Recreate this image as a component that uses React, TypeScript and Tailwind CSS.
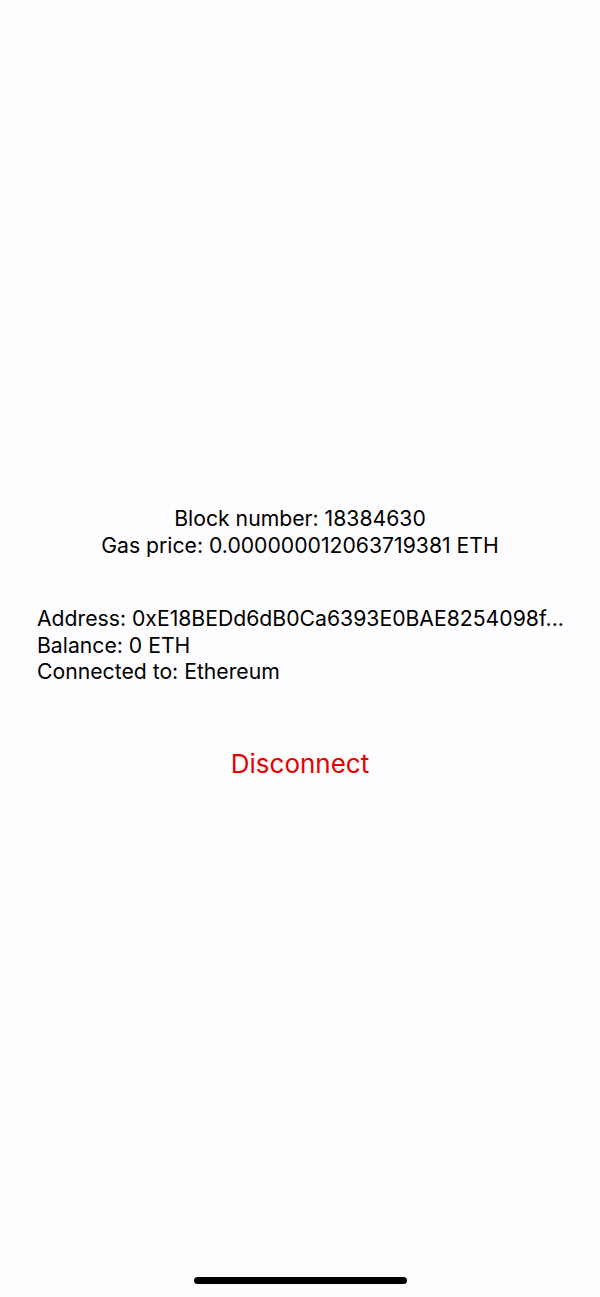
export default function App() {
  return (
    <div className="relative flex h-[1297px] w-[600px] flex-col bg-[#fdfcff] font-['Inter','Liberation_Sans',sans-serif] text-[21.2px] leading-[26.5px] text-black">
      {/* Network info */}
      <div className="mt-[505px] flex flex-col items-center">
        <div>Block number: 18384630</div>
        <div>Gas price: 0.000000012063719381 ETH</div>
      </div>

      {/* Account info */}
      <div className="mt-[47px] flex flex-col px-[37px]">
        <div className="whitespace-nowrap">Address: 0xE18BEDd6dB0Ca6393E0BAE8254098f...</div>
        <div>Balance: 0 ETH</div>
        <div>Connected to: Ethereum</div>
      </div>

      <div className="mt-[64px] flex justify-center">
        <button className="text-[26px] leading-[30px] text-[#e60000]">Disconnect</button>
      </div>

      {/* Home indicator */}
      <div className="absolute bottom-[13px] left-[194px] h-[7px] w-[213px] rounded-full bg-black" />
    </div>
  );
}
